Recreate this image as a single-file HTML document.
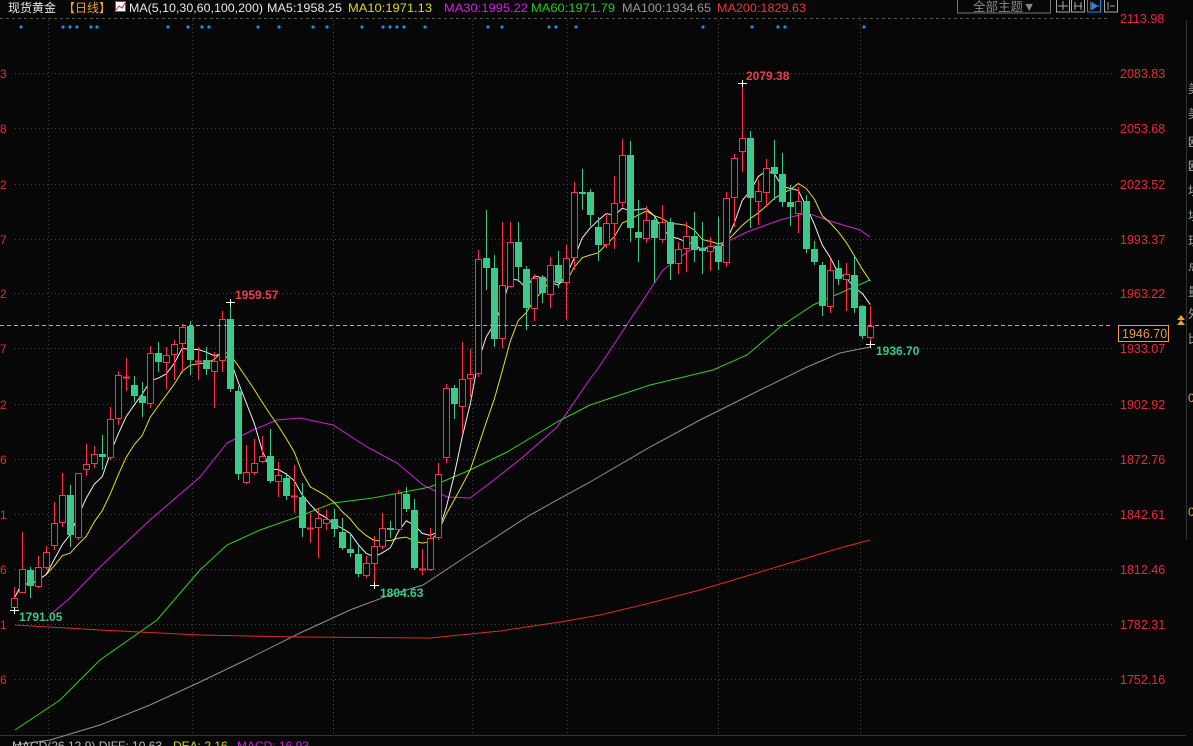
<!DOCTYPE html>
<html><head><meta charset="utf-8">
<style>
html,body{margin:0;padding:0;background:#070707;width:1193px;height:746px;overflow:hidden;font-family:"Liberation Sans","Noto Sans CJK SC",sans-serif;}
svg{position:absolute;left:0;top:0}
</style></head><body>
<svg id="s" width="1193" height="746" xmlns="http://www.w3.org/2000/svg" font-family="Liberation Sans, Noto Sans CJK SC, sans-serif">
<rect width="1193" height="746" fill="#070707"/>
<g id="grid" stroke="#444" stroke-dasharray="1,3" stroke-width="1"></g>
<line x1="0" y1="18.5" x2="1110" y2="18.5" stroke="#555" stroke-dasharray="3,3"/>
<line x1="0" y1="735.5" x2="1186" y2="735.5" stroke="#333"/>
<line x1="1186.5" y1="20" x2="1186.5" y2="540" stroke="#333"/>
<g id="ma"></g>
<g id="c"></g>
<line x1="0" y1="325.5" x2="1112" y2="325.5" stroke="#f0a030" stroke-dasharray="4,3"/>
<rect x="1118.5" y="325.5" width="50" height="16" fill="#000" stroke="#f0a030"/>
<text x="1122" y="338" font-size="12.5" fill="#e8a040">1946.70</text>
<path d="M1177 320 l4 -5 l4 5z M1177 325 l4 -5 l4 5z" fill="#f0a030"/>
<g font-size="12.5" fill="#e8283c" id="yl">
<text x="1120" y="23">2113.98</text><text x="1120" y="78">2083.83</text><text x="1120" y="133">2053.68</text>
<text x="1120" y="189">2023.52</text><text x="1120" y="244">1993.37</text><text x="1120" y="298">1963.22</text>
<text x="1120" y="353">1933.07</text><text x="1120" y="409">1902.92</text><text x="1120" y="464">1872.76</text>
<text x="1120" y="519">1842.61</text><text x="1120" y="574">1812.46</text><text x="1120" y="629">1782.31</text>
<text x="1120" y="684">1752.16</text>
</g>
<g font-size="12" fill="#e8283c">
<text x="0" y="78">3</text><text x="0" y="133">8</text><text x="0" y="189">2</text><text x="0" y="244">7</text>
<text x="0" y="298">2</text><text x="0" y="353">7</text><text x="0" y="409">2</text><text x="0" y="464">6</text>
<text x="0" y="519">1</text><text x="0" y="574">6</text><text x="0" y="629">1</text><text x="0" y="684">6</text>
</g>
<g font-size="12" fill="#9aa">
<text x="1188" y="93">美</text><text x="1188" y="118">美</text><text x="1188" y="146">欧</text><text x="1188" y="170">欧</text>
<text x="1188" y="195">埃</text><text x="1188" y="220">埃</text><text x="1188" y="245">现</text><text x="1188" y="270">点</text>
<text x="1188" y="296">量</text><text x="1188" y="318">外</text><text x="1188" y="343">比</text>
</g>
<text x="1188" y="402" font-size="12" fill="#e8a040">0</text>
<text x="1188" y="516" font-size="12" fill="#e8a040">0</text>
<g font-size="12" font-weight="bold">
<text x="746" y="80" fill="#f03c50">2079.38</text>
<text x="235" y="299" fill="#f03c50">1959.57</text>
<text x="876" y="355" fill="#3cc88a">1936.70</text>
<text x="19" y="621" fill="#3cc88a">1791.05</text>
<text x="380" y="597" fill="#3cc88a">1804.63</text>
</g>
<g id="dots" fill="#1c8ee8"></g>
<!-- top bar -->
<g font-size="12">
<text x="8" y="12" fill="#e8e8e8">现货黄金</text>
<text x="63" y="12" fill="#f0a030">【日线】</text>
<rect x="115.5" y="1.5" width="10" height="10" fill="#fff" stroke="#4060c0"/>
<path d="M116 10 l3 -4 l3 2 l3 -5" stroke="#e02020" fill="none"/>
<text x="129" y="12" fill="#e8e8e8" textLength="134" lengthAdjust="spacingAndGlyphs">MA(5,10,30,60,100,200)</text>
<text x="267" y="12" fill="#e8e8e8" textLength="75" lengthAdjust="spacingAndGlyphs">MA5:1958.25</text>
<text x="348" y="12" fill="#d8d820" textLength="84" lengthAdjust="spacingAndGlyphs">MA10:1971.13</text>
<text x="444" y="12" fill="#d020e0" textLength="84" lengthAdjust="spacingAndGlyphs">MA30:1995.22</text>
<text x="531" y="12" fill="#20c820" textLength="84" lengthAdjust="spacingAndGlyphs">MA60:1971.79</text>
<text x="622" y="12" fill="#999" textLength="89" lengthAdjust="spacingAndGlyphs">MA100:1934.65</text>
<text x="717" y="12" fill="#e83838" textLength="89" lengthAdjust="spacingAndGlyphs">MA200:1829.63</text>
</g>
<rect x="957.5" y="-1" width="93" height="14" fill="none" stroke="#777"/>
<text x="973" y="11" font-size="12.5" fill="#888">全部主题▼</text>
<g stroke="#aaa" fill="none">
<rect x="1056.5" y="-1" width="13" height="13"/><rect x="1071.5" y="-1" width="13" height="13"/>
<rect x="1087.5" y="-1" width="13" height="13" stroke="#1c8ee8"/><rect x="1104.5" y="-1" width="13" height="13"/>
<path d="M1063 1 v9 M1058 6 h10 M1075 2 v8 M1081 2 v8 M1074 6 h8 M1091 2 v8 M1098 6 h1 M1108 2 v8 M1110 6 h5"/>
<path d="M1092 2 l6 4 l-6 4z" fill="#1c8ee8" stroke="none"/>
</g>
<g font-size="12">
<text x="12" y="750" fill="#bbb">MACD(26,12,9) DIFF: 10.63</text>
<text x="173" y="750" fill="#d8d820">DEA: 2.16</text>
<text x="237" y="750" fill="#d020e0">MACD: 16.93</text>
</g>
</svg>
<script>
var NS="http://www.w3.org/2000/svg";
function el(p,t,a){var e=document.createElementNS(NS,t);for(var k in a)e.setAttribute(k,a[k]);document.getElementById(p).appendChild(e);return e;}
[73,128,184,239,293,348,404,459,514,569,624,679].forEach(function(y){el("grid","line",{x1:15,y1:y+.5,x2:1112,y2:y+.5});});
[48,192,333,472,567,718,860].forEach(function(x){el("grid","line",{x1:x+.5,y1:20,x2:x+.5,y2:735});});
[21,63,70,77,91,97,168,188,202,209,258,279,313,327,362,383,390,397,404,425,488,502,549,556,576,703,752,778,785,864].forEach(function(x){el("dots","circle",{cx:x,cy:27,r:1.6});});
var d=[
["r",598,607,587,610],["r",569,592,532,592],["g",570,586,567,598],["r",567,586,556,588],["r",552,567,546,570],
["r",523,545,502,550],["r",495,522,473,527],["g",495,535,485,547],["r",473,537,473,540],["r",464,469,444,476],
["r",454,463,446,468],["g",454,457,435,470],["r",419,457,407,460],["r",375,418,371,425],["r",377,377,358,391],
["g",385,396,376,402],["g",396,403,382,417],["r",353,403,346,408],["g",353,362,342,372],["r",355,362,347,389],
["r",344,354,340,380],["r",327,343,324,373],["g",326,360,321,375],["r",361,361,347,380],["g",360,369,347,375],
["r",361,371,352,408],["r",319,360,311,372],["g",319,389,302,392],["g",391,474,386,480],["r",472,482,445,484],
["r",463,472,439,475],["r",456,461,436,463],["g",456,481,429,483],["r",475,481,462,497],["g",478,496,473,500],
["r",496,496,465,513],
["g",497,528,483,537],["r",528,528,513,543],["r",518,527,508,558],["r",519,523,510,530],["g",519,529,509,537],
["g",532,548,518,550],["g",549,553,533,557],["g",554,574,545,577],["r",563,575,556,578],["r",546,563,536,585],
["r",528,546,513,549],["g",528,528,521,538],["r",493,529,490,530],["g",494,509,487,512],["g",510,568,499,570],
["r",569,569,549,575],["r",538,569,528,571],["r",474,537,463,540],["r",388,457,384,463],["g",388,404,385,419],
["r",379,406,342,433],["r",374,378,349,397],["r",259,373,250,377],["g",258,268,210,290],["g",268,339,255,347],
["r",285,338,222,348],["r",242,286,222,288],["g",242,267,222,282],["g",269,308,266,330],["r",278,308,274,321],
["g",277,293,275,303],["r",265,294,257,308],["g",265,282,251,288],["r",258,282,245,320],["r",192,257,182,270],
["g",192,192,169,210],
["g",192,215,189,226],["g",227,245,217,261],["r",223,244,213,248],["r",203,223,176,249],["r",155,202,139,207],
["g",155,228,141,242],["g",232,238,200,262],["r",220,238,206,243],["g",220,238,218,283],["r",222,239,205,243],
["g",222,264,218,280],["r",249,263,242,274],["r",236,248,222,272],["g",236,250,212,262],["g",248,251,222,274],
["r",246,251,237,271],["g",246,262,217,270],["r",198,262,192,267],["r",158,197,154,227],["r",138,151,83,172],
["g",138,198,131,228],["r",191,201,180,225],["r",168,192,159,207],["g",167,174,140,200],["g",174,202,153,207],
["g",202,207,185,226],["r",201,213,187,233],["g",201,249,195,253],["g",249,262,241,265],["g",265,306,262,316],
["r",270,306,259,313],["g",268,279,260,285],["r",274,279,263,311],["g",275,308,255,313],["g",306,336,305,339],
["r",326,337,306,344]];
var n=d.length, x0=14.3, st=(870.3-14.3)/(n-1);
var closes=d.map(function(c){return c[0]=="r"?c[1]:c[2];});
function maPts(p){var a=[];for(var i=0;i<n;i++){var s=0,k=0;for(var j=Math.max(0,i-p+1);j<=i;j++){s+=closes[j];k++;}a.push((x0+st*i).toFixed(1)+","+(s/k).toFixed(1));}return a.join(" ");}
function poly(pts,col){el("ma","polyline",{points:pts,fill:"none",stroke:col,"stroke-width":1});}
poly("50,615 70,598 100,567 150,520 200,477 227,443 253,430 277,420 300,418 333,425 367,447 397,463 423,485 447,497 470,498 490,483 523,457 557,427 590,379 597,370 630,320 663,270 690,250 720,245 747,232 780,220 807,213 833,222 860,230 870,237","#d020d8");
poly("15,730 60,700 100,660 157,620 200,570 227,545 260,530 300,516 333,503 373,498 430,487 470,470 507,452 557,422 590,405 650,385 713,370 747,355 780,327 813,305 847,290 870,280","#30d020");
poly("15,745 50,740 100,725 150,705 200,682 250,658 300,633 350,610 390,595 423,585 473,552 530,515 590,482 650,447 700,420 750,395 807,367 840,353 870,347","#909090");
poly("15,625 100,630 200,635 300,637 430,638 500,631 560,622 600,615 650,603 700,590 750,575 800,560 840,548 870,540","#e02828");
poly(maPts(10),"#e0e020");
poly(maPts(5),"#f0f0f0");
d.forEach(function(c,i){
 var x=x0+st*i, xr=Math.round(x), col=c[0]=="r"?"#ff3048":"#3cc88a";
 var t=c[1],b=c[2];
 el("c","line",{x1:xr+.5,y1:c[3],x2:xr+.5,y2:c[4],stroke:col});
 if(c[0]=="r"){
  if(b-t<2){el("c","line",{x1:xr-3,y1:t+.5,x2:xr+4,y2:t+.5,stroke:col,"stroke-width":2});}
  else el("c","rect",{x:xr-2.5,y:t+.5,width:6,height:b-t,fill:"#070707",stroke:col});
 } else {
  el("c","rect",{x:xr-3,y:t,width:7,height:Math.max(2,b-t),fill:col});
 }
});
[[14,610],[230,302],[742,83],[374,585],[870,344]].forEach(function(p){el("c","path",{d:"M"+(p[0]-4)+" "+(p[1]+.5)+"h9M"+(p[0]+.5)+" "+(p[1]-3)+"v7",stroke:"#fff"});});
</script>
</body></html>
